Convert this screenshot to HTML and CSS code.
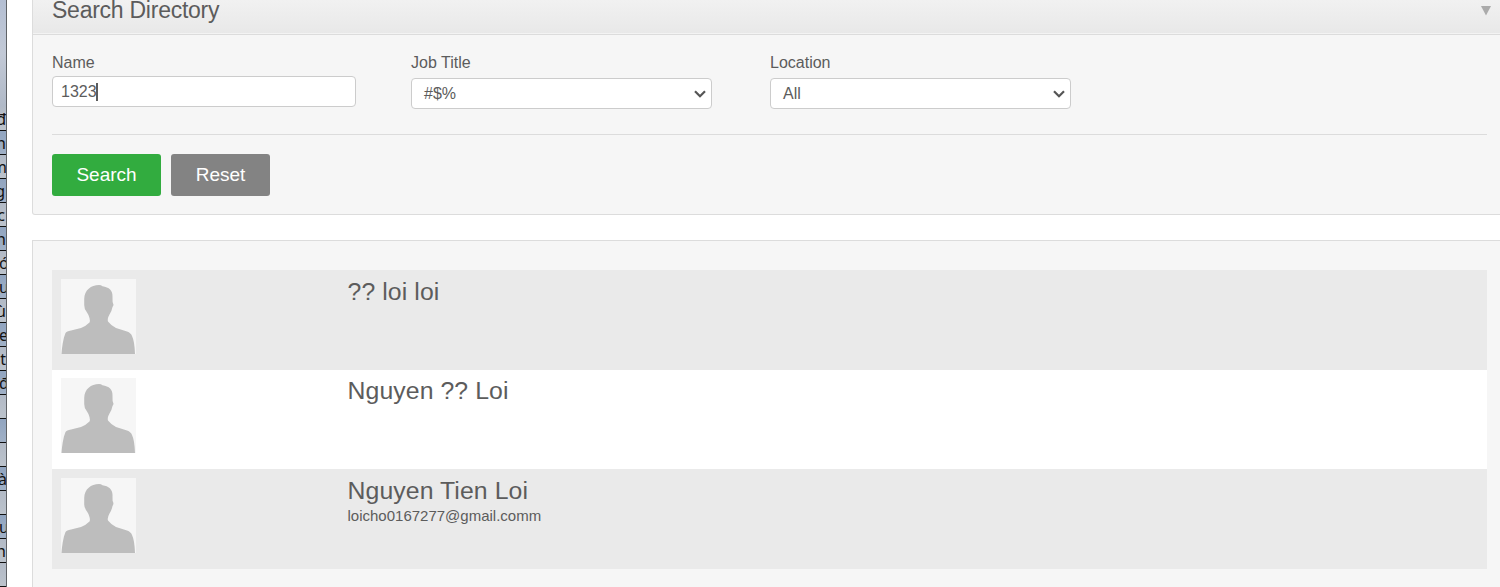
FILE: index.html
```html
<!DOCTYPE html>
<html lang="en">
<head>
<meta charset="utf-8">
<title>Search Directory</title>
<link rel="stylesheet" href="styles.css">
</head>
<body>
<svg width="0" height="0" class="defs" aria-hidden="true">
  <symbol id="person" viewBox="0 0 75 75">
    <path fill="#bdbdbd" d="M0.5 75C1 68 2 60 4.5 54Q5.5 52.3 10 51.5L20 49Q25 47 28.5 43.5Q29.3 42 28.5 39Q27.8 36 26 33.5Q23 29.5 23.2 26V20C23.5 11 30 6 38 6Q40 6 41.5 7.3C48 8 52 12 51.5 18L51.6 23Q53.3 25.5 51.5 28Q50.8 32 48.5 35.5Q46 40 47 42.5Q50 46.5 55 49L66 52.5Q70 54 71 57Q73.5 62 74 75Z"/>
  </symbol>
</svg>
<div class="layout">
  <aside class="sheet">
    <div class="cell cell-top"></div>
    <div class="cell"><span>đ</span></div>
    <div class="cell blue"><span>n</span></div>
    <div class="cell"><span class="over">m</span></div>
    <div class="cell blue inset"><span>g</span></div>
    <div class="cell inset"><span>c</span></div>
    <div class="cell blue"><span>n</span></div>
    <div class="cell start"><span>ó</span></div>
    <div class="cell blue start"><span>u</span></div>
    <div class="cell"><span>ù</span></div>
    <div class="cell blue start"><span>e</span></div>
    <div class="cell"><span>t</span></div>
    <div class="cell blue start"><span>đ</span></div>
    <div class="cell"></div>
    <div class="cell blue"></div>
    <div class="cell"></div>
    <div class="cell blue"><span class="over">và</span></div>
    <div class="cell"></div>
    <div class="cell blue"><span class="out">cu</span></div>
    <div class="cell"><span>h</span></div>
    <div class="cell"></div>
  </aside>
  <main class="content">
    <section class="panel search-panel">
      <header class="panel-head">
        <h1>Search Directory</h1>
        <svg class="toggle" width="10" height="10" viewBox="0 0 10 10"><path d="M0 0H10L5 9.5Z" fill="#ababab"/></svg>
      </header>
      <form class="panel-body">
        <div class="fields">
          <div class="field">
            <span class="label">Name</span>
            <div class="input">1323<i class="caret"></i></div>
          </div>
          <div class="field">
            <span class="label">Job Title</span>
            <div class="select">#$%<svg width="12" height="8" viewBox="0 0 12 8"><path d="M1 1.2L6 6.2L11 1.2" fill="none" stroke="#555" stroke-width="2.2"/></svg></div>
          </div>
          <div class="field">
            <span class="label">Location</span>
            <div class="select">All<svg width="12" height="8" viewBox="0 0 12 8"><path d="M1 1.2L6 6.2L11 1.2" fill="none" stroke="#555" stroke-width="2.2"/></svg></div>
          </div>
        </div>
        <div class="actions">
          <button type="button" class="btn primary">Search</button>
          <button type="button" class="btn reset">Reset</button>
        </div>
      </form>
    </section>
    <section class="panel results">
      <div class="row shaded">
        <svg class="avatar"><use href="#person"/></svg>
        <div class="info"><h2>?? loi loi</h2></div>
      </div>
      <div class="row plain">
        <svg class="avatar"><use href="#person"/></svg>
        <div class="info"><h2>Nguyen ?? Loi</h2></div>
      </div>
      <div class="row shaded">
        <svg class="avatar"><use href="#person"/></svg>
        <div class="info"><h2>Nguyen Tien Loi</h2><p>loicho0167277@gmail.comm</p></div>
      </div>
    </section>
  </main>
</div>
</body>
</html>
```
FILE: styles.css
```css
* { box-sizing: border-box; }
body {
  margin: 0;
  height: 587px;
  overflow: hidden;
  background: #fff;
  color: #5c5c5c;
  font-family: "Liberation Sans", Arial, sans-serif;
  font-size: 16px;
}
.defs { display: none; }
h1, h2, p { margin: 0; font-weight: normal; }
.layout { display: flex; height: 587px; overflow: hidden; }

.sheet {
  flex: none;
  width: 7px;
  height: 587px;
  overflow: hidden;
  border-right: 1px solid #5f6266;
}
.cell {
  display: flex;
  justify-content: flex-end;
  height: 24px;
  border-bottom: 1px solid #111;
  background: linear-gradient(#b2bac6, #bcc3cc);
  color: #111;
  font: 16px/24px "Noto Sans", sans-serif;
}
.cell.blue { background: linear-gradient(#91a5c0, #a0b0c6); }
.cell.start { justify-content: flex-start; }
.cell.start span { margin-left: -1px; }
.cell.inset { padding-right: 1px; }
.cell .over { margin-right: -1px; }
.cell .out { margin-right: -3px; }
.cell-top { height: 107px; border-bottom: 0; background: linear-gradient(#b4bfd3, #c2c9d6 50%, #b0b9c7); }

.content { flex: none; width: 1510px; padding-left: 25px; }
.panel { border: 1px solid #dcdcdc; background: #f6f6f6; }
.search-panel { height: 215px; border-top: 0; border-radius: 0 0 3px 3px; }
.panel-head {
  display: flex;
  height: 35px;
  padding-left: 19px;
  border-bottom: 1px solid #dcdcdc;
  box-shadow: inset 0 -1px #f3f3f3;
  background: linear-gradient(#f1f1f1, #e8e8e8);
}
.panel-head h1 { width: 1429px; font-size: 23px; line-height: 26px; margin-top: -3px; letter-spacing: -0.25px; }
.toggle { margin-top: 6px; }
.panel-body { padding: 19px 0 0 19px; }
.fields { display: flex; width: 1435px; height: 81px; border-bottom: 1px solid #dcdcdc; }
.field { width: 359px; }
.label { display: block; line-height: 18px; }
.input, .select {
  display: flex;
  align-items: center;
  height: 31px;
  border: 1px solid #ccc;
  border-radius: 4px;
  background: #fff;
}
.input { width: 304px; margin-top: 4px; padding-left: 8px; }
.caret { width: 2px; height: 18px; margin-left: -1px; background: #5c5c5c; }
.select { justify-content: space-between; width: 301px; margin-top: 6px; padding: 0 5px 0 12px; }
.actions { display: flex; gap: 10px; padding-top: 19px; }
.btn {
  height: 42px;
  padding: 0;
  border: 0;
  border-radius: 3px;
  color: #fff;
  font: 19px "Liberation Sans", Arial, sans-serif;
}
.primary { width: 109px; background: #32ac3f; }
.reset { width: 99px; background: #838383; }

.results { height: 360px; margin-top: 25px; padding: 29px 0 0 19px; }
.row { display: flex; width: 1435px; height: 100px; padding: 9px 0 0 9px; }
.row.shaded { background: #eaeaea; }
.row.plain { height: 99px; padding-top: 8px; background: #fff; }
.avatar { flex: none; width: 75px; height: 75px; background: #f6f6f6; }
.info { padding-left: 211.5px; margin-top: -2px; }
.info h2 { font-size: 24.8px; line-height: 30px; letter-spacing: 0.09px; }
.info p { font-size: 15px; line-height: 18px; margin-top: 1px; }
```
